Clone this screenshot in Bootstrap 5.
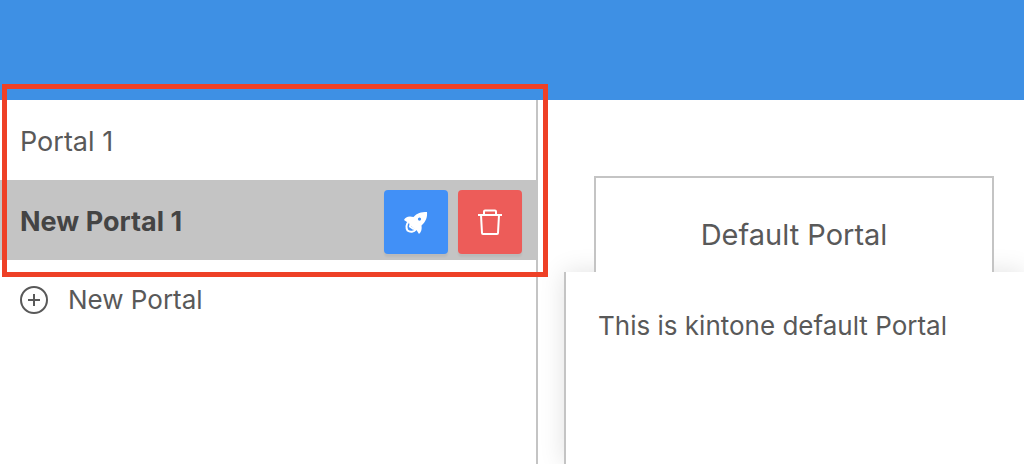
<!DOCTYPE html>
<html lang="en">
<head>
<meta charset="utf-8">
<meta name="viewport" content="width=device-width, initial-scale=1">
<title>Portal</title>
<link href="https://cdn.jsdelivr.net/npm/bootstrap@5.3.0/dist/css/bootstrap.min.css" rel="stylesheet">
<style>
body { font-family: Inter, "Liberation Sans", sans-serif; font-size: 26px; line-height: 32px; color: #595959; overflow: hidden; }
.topbar { height: 100px; background: #3e90e4; }
.sidebar { flex: 0 0 538px; border-right: 2px solid #c4c4c4; }
.entry { height: 80px; padding: 0 14px 0 20px; }
.entry button.plain { color: inherit; padding: 0; border: 0; background: none; font: inherit; text-align: left; }
.saved .entry { padding-top: 4px; font-size: 27px; }
.entry.chosen { background: #c4c4c4; }
.entry.chosen button.plain { color: #444; font-weight: 700; }
.tools { gap: 10px; }
.tool { width: 64px; height: 64px; padding: 0; border: 0; border-radius: 4px; box-shadow: 0 3px 2px #0000000d; }
.tool-launch, .tool-launch:hover { background: #4190f7; }
.tool-delete, .tool-delete:hover { background: #ed5c59; }
.add-new { gap: 20px; }
.highlight { inset: -16px -12px -17px 2px; border: 5px solid #ee4026; z-index: 2; }
.content { padding: 76px 0 0 26px; }
.tab-head { width: 400px; max-width: calc(100% - 60px); height: 96px; margin-left: 30px; padding-top: 20px; border: 2px solid #c4c4c4; border-bottom: 0; background: #fff; font-size: 29px; line-height: 74px; z-index: 1; }
.panel { border-left: 2px solid #c4c4c4; padding: 38px 32px; box-shadow: 0 0 24px #0000001f; background: #fff; }
</style>
</head>
<body class="vh-100 d-flex flex-column">
<header class="topbar flex-shrink-0"></header>
<div class="d-flex flex-grow-1">
  <nav class="sidebar" aria-label="Portals">
    <div class="saved position-relative">
      <div class="entry d-flex align-items-center"><button type="button" class="plain flex-grow-1">Portal 1</button></div>
      <div class="entry chosen d-flex align-items-center">
        <button type="button" class="plain flex-grow-1">New Portal 1</button>
        <div class="tools d-flex">
          <button type="button" class="btn tool tool-launch d-flex align-items-center justify-content-center" aria-label="Publish">
            <svg width="28" height="28" viewBox="0 0 28 28" fill="#fff"><path fill-rule="evenodd" d="M25 4C19 4 15 5 11.500 9L8 8.500C5 8.500 3 10 2 12L5 14L6.500 14.500L9 18L12 20.500L14.500 22L17 26C19.500 24 20 21 19.500 17.500C24 13.500 25.500 9 25 4ZM17.500 9.500a1.600 1.600 0 1 1 0 3.200a1.600 1.600 0 1 1 0-3.200Z"/><path d="M6.500 14C4 16 4 20 5.500 22.500C8 24.500 12 24 14 21.500L11.500 21M8.500 16L8 18.500L11.500 21" fill="none" stroke="#fff" stroke-width="2"/></svg>
          </button>
          <button type="button" class="btn tool tool-delete d-flex align-items-center justify-content-center" aria-label="Delete">
            <svg width="28" height="28" viewBox="0 0 28 28" fill="none" stroke="#fff" stroke-width="2"><path d="M2 7H26M8 7V3.500Q8 2.500 9 2.500H19Q20 2.500 20 3.500V7M5 7L6 25Q6 26 7 26H21Q22 26 22 25L23 7"/></svg>
          </button>
        </div>
      </div>
      <div class="highlight position-absolute pe-none"></div>
    </div>
    <div class="entry d-flex align-items-center">
      <button type="button" class="plain add-new d-flex align-items-center">
        <svg width="28" height="28" viewBox="0 0 28 28" fill="none" stroke="#595959" stroke-width="2" aria-hidden="true"><circle cx="14" cy="14" r="13"/><path d="M8 14H20M14 8V20"/></svg>
        New Portal
      </button>
    </div>
  </nav>
  <main class="content flex-grow-1 d-flex flex-column overflow-hidden">
    <h1 class="tab-head position-relative text-center fw-normal mb-0">Default Portal</h1>
    <section class="panel flex-grow-1">This is kintone default Portal</section>
  </main>
</div>
<script src="https://cdn.jsdelivr.net/npm/bootstrap@5.3.0/dist/js/bootstrap.bundle.min.js"></script>
</body>
</html>
